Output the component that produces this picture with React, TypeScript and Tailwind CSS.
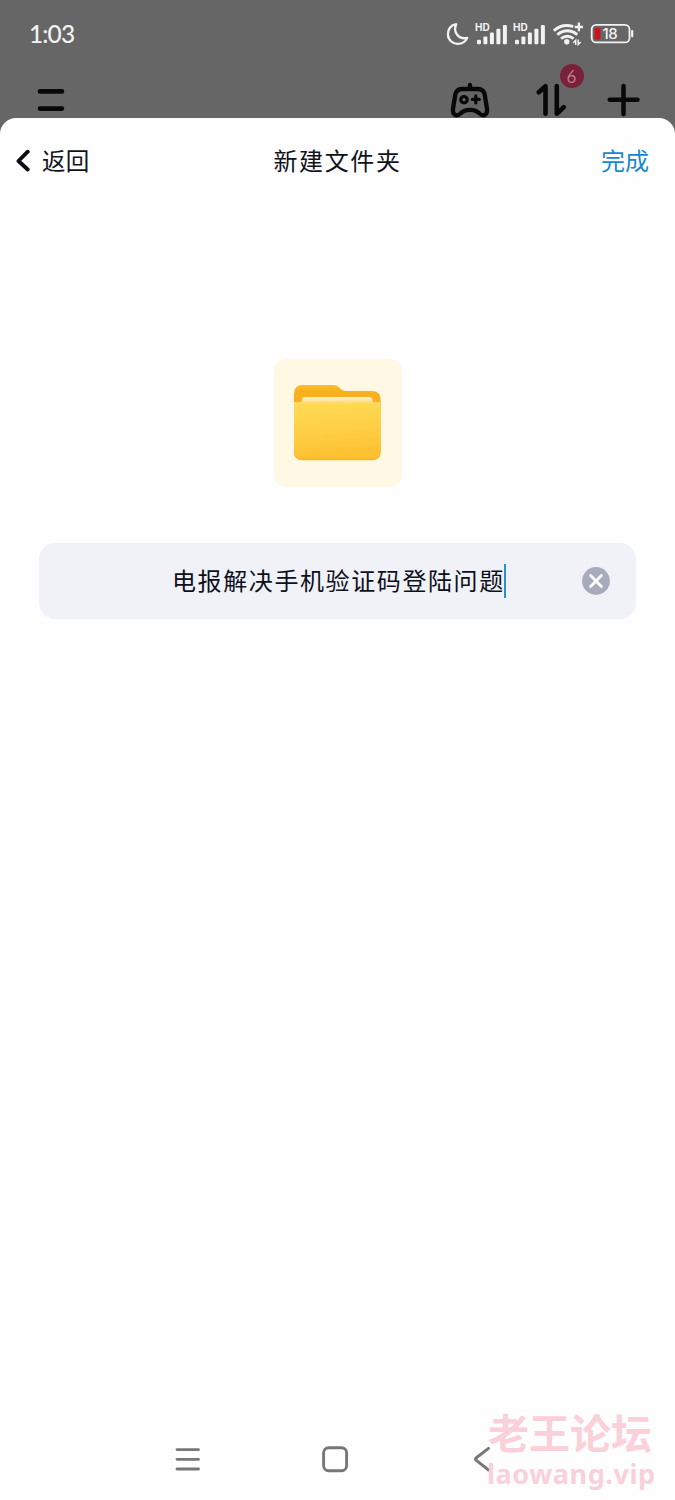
import React from 'react';

const Moon = () => (
  <svg className="h-6 w-6 shrink-0" viewBox="446 22 24 24" fill="none" stroke="#f2f2f2" strokeWidth="2.3" strokeLinejoin="round">
    <path d="M456.2 24.2C450.8 25 447.6 29.4 447.9 34.4C448.2 40 452.6 44 457.8 43.9C462 43.8 465.6 41.6 467.2 37.9C463 38.8 459.4 37.6 457.2 34.8C454.8 31.6 454.6 27.6 456.2 24.2Z" />
  </svg>
);

const Signal = () => (
  <div className="relative h-6 w-8 shrink-0">
    <svg className="h-6 w-8" viewBox="475 22 32 24" fill="#f2f2f2">
      <rect x="477" y="39.8" width="4" height="4.4" rx="1.2" />
      <rect x="483.4" y="36.5" width="4" height="7.7" rx="1" />
      <rect x="489.9" y="32.5" width="4" height="11.7" rx="1" />
      <rect x="496.4" y="28.8" width="4" height="15.4" rx="1" />
      <rect x="502.9" y="25" width="4" height="19.2" rx="1" />
    </svg>
    <span className="absolute left-0 top-[1px] font-['Inter'] text-[10px] font-bold leading-[9px]">HD</span>
  </div>
);

const Wifi = () => (
  <svg className="h-6 w-8 shrink-0" viewBox="553 22 32 24" fill="none" stroke="#f2f2f2" strokeWidth="2.9">
    <path d="M553.8 30.6Q563 23 573.2 26.7" />
    <path d="M557.3 34.6Q567.3 27 577.3 34.6" />
    <path d="M561 38.6Q567.3 33.7 573.6 38.6" />
    <circle cx="566.8" cy="41.7" r="2.7" fill="#f2f2f2" stroke="none" />
    <path d="M574.7 27H583M578.9 22.6V31.2" strokeWidth="2.3" />
    <path d="M575.7 45V40.2L573.2 42.7M578.2 39.6V44.4L580.8 42" strokeWidth="1.5" />
  </svg>
);

const Battery = () => (
  <div className="relative h-6 w-11 shrink-0">
    <svg className="h-6 w-11" viewBox="590 22 44 24" fill="none">
      <rect x="591.7" y="24.9" width="37.8" height="17.5" rx="4.5" stroke="#f2f2f2" strokeWidth="1.8" />
      <path d="M632.2 31V36.3" stroke="#f2f2f2" strokeWidth="2.2" strokeLinecap="round" />
      <rect x="594.5" y="27.8" width="6" height="11.8" rx="1.5" fill="#c9151b" />
    </svg>
    <span className="absolute left-[12.5px] top-[4px] font-['Inter'] text-[15px] leading-[16px] font-medium tracking-[-0.5px]">18</span>
  </div>
);

const FolderIcon = () => (
  <svg className="h-[76px] w-[88px]" viewBox="294.3 385 88 76">
    <defs>
      <linearGradient id="back" x1="0" y1="0" x2="0" y2="1">
        <stop offset="0" stopColor="#fdbe2c" />
        <stop offset="0.25" stopColor="#f9b01c" />
      </linearGradient>
      <linearGradient id="front" x1="0" y1="0" x2="0.15" y2="1">
        <stop offset="0" stopColor="#ffda57" />
        <stop offset="0.55" stopColor="#ffcf45" />
        <stop offset="1" stopColor="#fdc132" />
      </linearGradient>
      <linearGradient id="paper" x1="0" y1="0" x2="0" y2="1">
        <stop offset="0" stopColor="#fff3d3" />
        <stop offset="1" stopColor="#ffd568" />
      </linearGradient>
    </defs>
    <path d="M294.3 394Q294.3 385 303 385H334Q337 385 339.3 387.2L341 389Q343 391 346 391H372Q381 391 381 400V410H294.3Z" fill="url(#back)" />
    <path d="M302 404V400Q302 397 306 397H369Q373 397 373 401V404Z" fill="url(#paper)" />
    <path d="M294.3 402.6H381V452Q381 460.2 372 460.2H303Q294.3 460.2 294.3 452Z" fill="#fab827" />
    <path d="M294.3 402.6H381V450.5Q381 458.2 372 458.2H303Q294.3 458.2 294.3 450.5Z" fill="url(#front)" />
    <path d="M294.3 403H381" stroke="#ffe487" strokeWidth="1" />
  </svg>
);

function StatusBar() {
  return (
    <div className="flex h-[68px] shrink-0 items-center pl-[29px] text-[#f2f2f2]">
      <span className="w-[417px] pt-[1px] font-['Lato'] text-[24.5px] font-medium leading-none tracking-[-0.9px]">1:03</span>
      <Moon />
      <div className="ml-[5px] flex gap-[6px]">
        <Signal />
        <Signal />
      </div>
      <div className="ml-[8px] flex gap-[5px]">
        <Wifi />
        <Battery />
      </div>
    </div>
  );
}

function AppHeader() {
  return (
    <div className="flex h-[50px] shrink-0 items-end pl-[36px]">
      <svg className="h-[36px] w-[30px]" viewBox="36 82 30 36" stroke="#080808" strokeWidth="4.6" strokeLinecap="round">
        <path d="M40 91.4H62M40 108.6H62" />
      </svg>
      <svg className="ml-[384px] h-[36px] w-[40px]" viewBox="450 82 40 36" fill="none" stroke="#080808" strokeWidth="4.3" strokeLinecap="round" strokeLinejoin="round">
        <path d="M470 85V89M462.5 89H477.5Q482.8 89 484.5 93.5L486.8 107.5C488.2 115 483.5 117 479.5 113.5C476.5 110.3 474 109.8 470 109.8S463.5 110.3 460.5 113.5C456.5 117 451.8 115 453.2 107.5L455.5 93.5Q457.2 89 462.5 89Z" />
        <circle cx="464" cy="99.7" r="3.2" strokeWidth="3.2" />
        <path d="M472.3 99.4H479.3M475.8 95.9V102.9" strokeWidth="3.2" />
      </svg>
      <div className="relative ml-[46px] h-[36px] w-[32px]">
        <svg className="h-[36px] w-[32px]" viewBox="536 82 32 36" fill="none" stroke="#080808" strokeWidth="4.6" strokeLinecap="round" strokeLinejoin="round">
          <path d="M538.8 92.3L545.5 86.2V113.8M556.8 86V113.8L563.7 107.2" />
        </svg>
        <span className="absolute -top-[18px] left-[23.5px] flex h-6 w-6 items-center justify-center rounded-full bg-[#7a2038] font-['Lato'] text-[17px] leading-none text-[#b77c8c]">6</span>
      </div>
      <svg className="ml-[38px] h-[36px] w-[36px]" viewBox="606 82 36 36" stroke="#080808" strokeWidth="4.5" strokeLinecap="round">
        <path d="M609.7 99.7H637.5M623.5 86V114" />
      </svg>
    </div>
  );
}

function SheetHeader() {
  return (
    <div className="grid h-[86px] shrink-0 grid-cols-3 items-center pl-[15px] pr-[26px] text-[#10131c]">
      <button className="flex items-center text-[23.5px] leading-none tracking-[0.3px]">
        <svg className="mr-[11px] h-6 w-4" viewBox="15 149 16 24" fill="none" stroke="#0c0e14" strokeWidth="3.9" strokeLinecap="round" strokeLinejoin="round">
          <path d="M27.7 151.7L18.5 161L27.7 169.5" />
        </svg>
        返回
      </button>
      <h1 className="ml-[11px] whitespace-nowrap pb-[2px] text-center text-[24px] leading-none tracking-[1.6px]">新建文件夹</h1>
      <button className="pb-[2px] text-right text-[24px] leading-none text-[#1989cb]">完成</button>
    </div>
  );
}

function NameField() {
  return (
    <div className="mx-[39px] mt-[56px] flex h-[76px] items-center rounded-[16px] bg-[#f1f2f7] pl-[133px]">
      <span className="whitespace-nowrap pb-[2px] text-[24px] leading-none tracking-[1.6px] text-[#0c1020]">电报解决手机验证码登陆问题</span>
      <span className="-ml-[0.8px] h-[34px] w-[2px] bg-[#2c90cc]" />
      <svg className="ml-[76px] h-[28px] w-[28px]" viewBox="0 0 28 28">
        <circle cx="14" cy="14" r="13.9" fill="#a6acbb" />
        <path d="M8.6 8.6L19.4 19.4M19.4 8.6L8.6 19.4" stroke="#fff" strokeWidth="2.8" strokeLinecap="round" />
      </svg>
    </div>
  );
}

function NavBar() {
  return (
    <div className="relative mt-auto flex h-[82px] shrink-0 items-center pl-[174px]">
      <svg className="h-7 w-7" viewBox="174 1445 28 28" stroke="#777" strokeWidth="2.8" strokeLinecap="round">
        <path d="M177 1449.6H198.5M177 1459.3H198.5M177 1469H198.5" />
      </svg>
      <svg className="ml-[119px] h-7 w-7" viewBox="321 1445 28 28" fill="none" stroke="#777" strokeWidth="2.9">
        <rect x="323.6" y="1447.8" width="23" height="23" rx="5" />
      </svg>
      <svg className="ml-[123px] h-7 w-5" viewBox="472 1445 20 28" fill="none" stroke="#777" strokeWidth="2.9" strokeLinecap="round" strokeLinejoin="round">
        <path d="M488.5 1448.4L476 1458Q475 1459.2 476 1460.2L488.5 1470" />
      </svg>
      <div className="absolute left-[488px] top-[-7px] whitespace-nowrap font-bold text-[#fad1d9]">
        <div className="text-[41px] leading-[41px]">老王论坛</div>
        <div className="-ml-[1px] mt-[8px] font-['Noto_Sans'] text-[27px] leading-[28px] tracking-[0.55px]">laowang.vip</div>
      </div>
    </div>
  );
}

export default function App() {
  return (
    <div className="flex h-[1500px] w-[675px] flex-col overflow-hidden bg-[#666] font-['Noto_Sans_CJK_SC',sans-serif]">
      <StatusBar />
      <AppHeader />
      <main className="flex flex-1 flex-col rounded-t-[16px] bg-[#fefefe]">
        <SheetHeader />
        <div className="mx-auto mt-[155px] flex h-[128px] w-[128px] shrink-0 items-center justify-center rounded-[12px] bg-[#fef8e4]">
          <FolderIcon />
        </div>
        <NameField />
        <NavBar />
      </main>
    </div>
  );
}
